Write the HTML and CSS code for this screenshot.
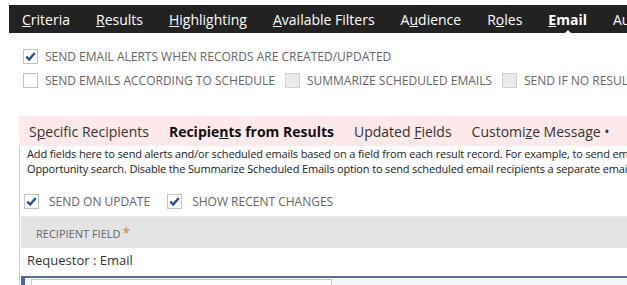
FILE: index.html
```html
<!DOCTYPE html>
<html>
<head>
    <meta charset="utf-8">
    <title>Email</title>
    <link rel="stylesheet" href="styles.css">
</head>
<body>
<div class="page">
    <ul class="main-tabs">
        <li><u>C</u>riteria</li>
        <li><u>R</u>esults</li>
        <li><u>H</u>ighlighting</li>
        <li><u>A</u>vailable Filters</li>
        <li>A<u>u</u>dience</li>
        <li>R<u>o</u>les</li>
        <li class="active"><u>E</u>mail</li>
        <li>Audit Trail</li>
    </ul>

    <div class="options">
        <div class="option-row">
            <label class="check"><span class="box checked"><svg viewBox="0 0 14 14"><path d="M2.5 7.2 L5.6 10.2 L11.6 3.2" /></svg></span>Send email alerts when records are created/updated</label>
        </div>
        <div class="option-row">
            <label class="check"><span class="box"></span>Send emails according to schedule</label>
            <label class="check"><span class="box disabled"></span>Summarize scheduled emails</label>
            <label class="check"><span class="box disabled"></span>Send if no results</label>
        </div>
    </div>

    <div class="sub-tabs">
        <span>S<u>p</u>ecific Recipients</span>
        <span class="active">Recipie<u>n</u>ts from Results</span>
        <span>Updated <u>F</u>ields</span>
        <span>Customi<u>z</u>e Message •</span>
    </div>

    <div class="panel">
        <p class="desc">
            <span>Add fields here to send alerts and/or scheduled emails based on a field from each result record. For example, to send emails to the owner of each</span>
            <span>Opportunity search. Disable the Summarize Scheduled Emails option to send scheduled email recipients a separate email for each result.</span>
        </p>
        <div class="option-row small">
            <label class="check"><span class="box checked"><svg viewBox="0 0 14 14"><path d="M2.5 7.2 L5.6 10.2 L11.6 3.2" /></svg></span>Send on update</label>
            <label class="check"><span class="box checked"><svg viewBox="0 0 14 14"><path d="M2.5 7.2 L5.6 10.2 L11.6 3.2" /></svg></span>Show recent changes</label>
        </div>
        <div class="grid-head">Recipient Field<span class="req">*</span></div>
        <div class="grid-row">Requestor : Email</div>
        <div class="edit-row">
            <div class="edit-field"></div>
        </div>
    </div>
</div>
</body>
</html>
```

FILE: styles.css
```css
body {
    margin: 0;
    overflow: hidden;
    background: #fff;
    font-family: "Open Sans", "Liberation Sans", sans-serif;
    color: #333;
}

.page {
    padding: 5px 0 0 9px;
    width: 900px;
}

.main-tabs {
    display: flex;
    gap: 26px;
    margin: 0;
    padding: 0 0 0 13px;
    height: 28px;
    align-items: center;
    list-style: none;
    background: #222;
    color: #fff;
    font-size: 14px;
    white-space: nowrap;
}

.main-tabs li {
    position: relative;
}

.main-tabs .active {
    font-weight: bold;
}

.main-tabs .active:after {
    content: "";
    position: absolute;
    left: 50%;
    bottom: -7px;
    margin-left: -6px;
    border: 6px solid transparent;
    border-bottom-color: #fff;
    border-top: 0;
}

.options {
    padding: 11px 0 0 14px;
    height: 72px;
}

.option-row {
    display: flex;
    gap: 10px;
    height: 24px;
    align-items: center;
    font-size: 12px;
    text-transform: uppercase;
    color: #666;
    white-space: nowrap;
}

.check {
    display: flex;
    align-items: center;
    gap: 7px;
}

.box {
    display: inline-block;
    box-sizing: border-box;
    width: 15px;
    height: 15px;
    border: 1px solid #c4c4c4;
    background: #fff;
}

.box.disabled {
    background: #ebebeb;
    border-color: #d0d0d0;
}

.box svg {
    display: block;
    width: 13px;
    height: 13px;
}

.box svg path {
    fill: none;
    stroke: #245394;
    stroke-width: 2.6;
}

.sub-tabs {
    display: flex;
    gap: 20px;
    height: 30px;
    align-items: center;
    margin-left: 10px;
    padding-left: 10px;
    background: #fde9e9;
    font-size: 14px;
    color: #333;
    white-space: nowrap;
}

.sub-tabs span {
    position: relative;
}

.sub-tabs .active {
    font-weight: bold;
    color: #111;
}

.sub-tabs .active:after {
    content: "";
    position: absolute;
    left: 50%;
    bottom: -8px;
    margin-left: -9px;
    border: 9px solid transparent;
    border-bottom: 4px solid #fff;
    border-top: 0;
}

.panel {
    margin-left: 10px;
    border-left: 1px solid #cfcfcf;
    padding-left: 1px;
}

.desc {
    margin: 0;
    padding: 0 0 1px 6px;
    font-size: 11px;
    line-height: 15px;
    letter-spacing: -0.15px;
    color: #222;
}

.desc span {
    display: block;
    white-space: nowrap;
}

.option-row.small {
    padding: 9px 0 0 3px;
    height: 30px;
    gap: 17px;
}

.option-row.small .check {
    gap: 10px;
}

.grid-head {
    height: 31px;
    line-height: 32px;
    padding-left: 15px;
    background: #e4e4e4;
    border-top: 1px solid #ececec;
    font-size: 11px;
    text-transform: uppercase;
    color: #666;
}

.req {
    color: #d08a2e;
    font-size: 14px;
    margin-left: 2px;
}

.grid-row {
    height: 28px;
    line-height: 24px;
    padding-left: 6px;
    font-size: 13px;
    color: #333;
}

.edit-row {
    border-top: 2px solid #5b7098;
    border-left: 4px solid #4a6aa8;
    background: #f5f5f5;
    padding: 1px 0 0 6px;
    height: 40px;
}

.edit-field {
    width: 299px;
    height: 30px;
    border: 1px solid #c8c8c8;
    background: #fff;
}
```
